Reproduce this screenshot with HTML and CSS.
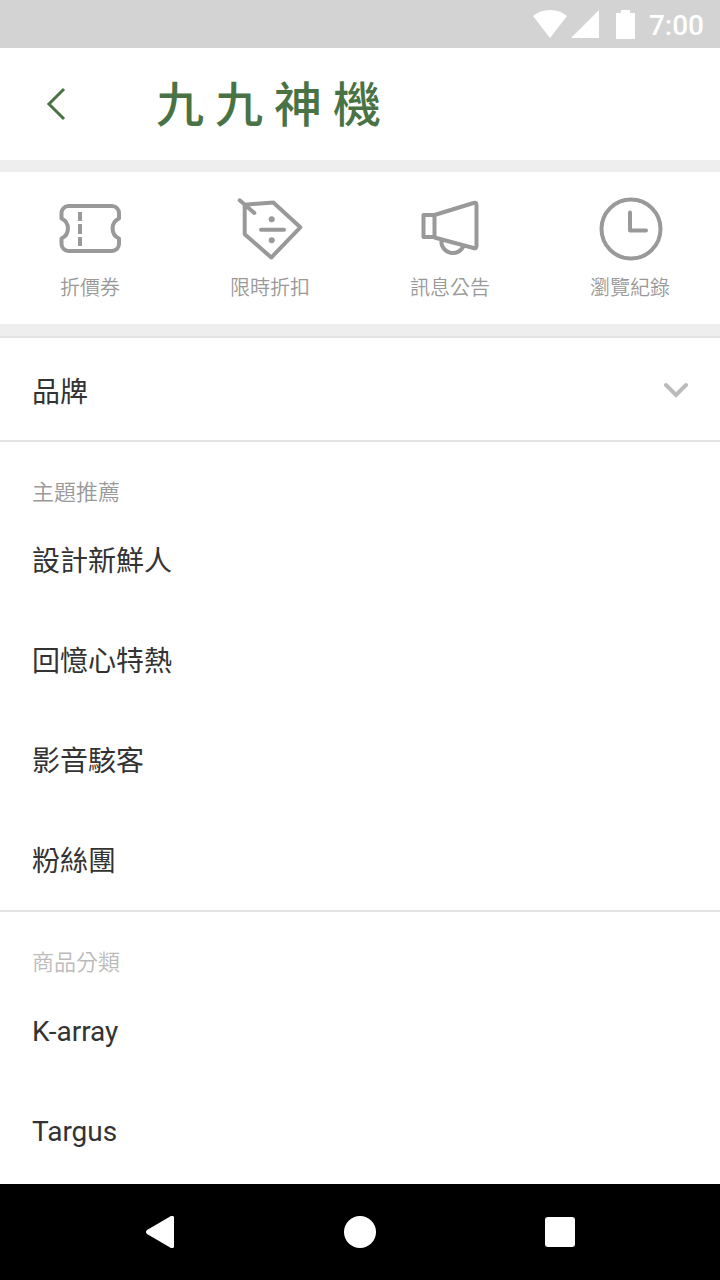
FILE: index.html
```html
<!DOCTYPE html>
<html lang="zh-Hant">
<head>
    <meta charset="UTF-8">
    <meta name="viewport" content="width=device-width, initial-scale=1.0">
    <title>九九神機</title>
    <link rel="stylesheet" href="styles.css">
</head>
<body>
    <div class="status-bar">
        <svg class="wifi" width="34" height="28" viewBox="0 0 34 28"><path d="M0 6Q7 0 17 0t17 6L17 28Z"/></svg>
        <svg class="signal" width="28" height="28" viewBox="0 0 28 28"><path d="M28 0v28H0Z"/></svg>
        <svg class="battery" width="19" height="29" viewBox="0 0 19 29"><path d="M5 0h9v3h5v26H0V3h5Z"/></svg>
        <span class="time">7:00</span>
    </div>

    <header class="header">
        <button type="button" class="back-btn" aria-label="返回">
            <svg width="20" height="36" viewBox="0 0 20 36"><path d="M18 3 3 18l15 15"/></svg>
        </button>
        <h1 class="logo"><span>九</span><span>九</span><span>神</span><span>機</span></h1>
    </header>

    <!-- Shortcuts -->
    <nav class="shortcuts">
        <a href="#coupon" class="shortcut">
            <svg width="72" height="72" viewBox="0 0 72 72">
                <path class="cut" d="M7.500 26.500V21a7 7 0 0 1 7-7H58a7 7 0 0 1 7 7v5.500a11 11 0 0 0 0 20V52a7 7 0 0 1-7 7H14.500a7 7 0 0 1-7-7v-5.500a11 11 0 0 0 0-20Z"/>
                <path class="cut" d="M26 20v9m0 3v10m0 3v9"/>
            </svg>
            <span>折價券</span>
        </a>
        <a href="#sale" class="shortcut">
            <svg width="72" height="72" viewBox="0 0 72 72">
                <path d="m10.700 12.700 28.600-2.200 27 24.800-29 30.200-26.600-23.200ZM5.700 8.300 20.300 21M27 37.700h23"/>
                <circle class="dot" cx="37.700" cy="27.300" r="3"/>
                <circle class="dot" cx="37.700" cy="48.300" r="3"/>
            </svg>
            <span>限時折扣</span>
        </a>
        <a href="#news" class="shortcut">
            <svg width="72" height="72" viewBox="0 0 72 72">
                <path d="M9.500 23h11v22h-11ZM20.500 23l39-12q3-1 3 2v41q0 3-3 2l-39-10.500M27.500 48a11.500 11.500 0 0 0 22 6"/>
            </svg>
            <span>訊息公告</span>
        </a>
        <a href="#history" class="shortcut">
            <svg width="72" height="72" viewBox="0 0 72 72">
                <circle cx="37" cy="37" r="29.500"/>
                <path d="M36 20.500v18h16"/>
            </svg>
            <span>瀏覽紀錄</span>
        </a>
    </nav>

    <main class="menu">
        <button type="button" class="brand-row" aria-expanded="false">
            品牌
            <svg width="24" height="16" viewBox="0 0 24 16"><path d="m2 3 10 10L22 3"/></svg>
        </button>

        <section class="menu-section">
            <h2>主題推薦</h2>
            <ul>
                <li><a href="#designer">設計新鮮人</a></li>
                <li><a href="#memory">回憶心特熱</a></li>
                <li><a href="#av">影音駭客</a></li>
                <li><a href="#fans">粉絲團</a></li>
            </ul>
        </section>

        <section class="menu-section">
            <h2 class="light">商品分類</h2>
            <ul>
                <li><a href="#k-array">K-array</a></li>
                <li><a href="#targus">Targus</a></li>
            </ul>
        </section>
    </main>

    <!-- Android navigation -->
    <footer class="system-nav">
        <button type="button" aria-label="Back">
            <svg width="32" height="32" viewBox="0 0 32 32"><path d="M27 0q3-1 3 2v28q0 3-3 2L3 18q-2-2 0-4Z"/></svg>
        </button>
        <button type="button" aria-label="Home">
            <svg width="32" height="32" viewBox="0 0 32 32"><circle cx="16" cy="16" r="16"/></svg>
        </button>
        <button type="button" aria-label="Recent apps">
            <svg width="32" height="32" viewBox="0 0 32 32"><rect x="1" y="1" width="30" height="30" rx="3"/></svg>
        </button>
    </footer>
</body>
</html>
```
FILE: styles.css
```css
* {
    margin: 0;
    padding: 0;
    box-sizing: border-box;
}

:root {
    --brand-color: #4a7345;
    --text-color: #333;
    --muted-color: #999;
    --line-color: #e3e3e3;
    --band-color: #eee;
}

body {
    min-height: 100vh;
    display: flex;
    flex-direction: column;
    background: #fff;
    color: var(--text-color);
    font-family: Roboto, "Noto Sans CJK TC", sans-serif;
    font-size: 28px;
}

button {
    border: none;
    background: none;
    font: inherit;
    color: inherit;
    cursor: pointer;
}

a {
    color: inherit;
    text-decoration: none;
}

ul {
    list-style: none;
}

svg {
    display: block;
}

.status-bar {
    display: flex;
    align-items: center;
    justify-content: flex-end;
    height: 48px;
    padding-right: 16px;
    background: #d3d3d3;
    color: #fff;
    fill: #fff;
}

.signal {
    margin-left: 4px;
}

.battery {
    margin: 0 14px 0 17px;
}

.time {
    padding-top: 4px;
    font-weight: 500;
    line-height: 44px;
}

.header {
    display: flex;
    align-items: center;
    height: 112px;
    color: var(--brand-color);
}

.back-btn {
    width: 112px;
    height: 112px;
    display: flex;
    align-items: center;
    justify-content: center;
}

.back-btn svg {
    fill: none;
    stroke: currentColor;
    stroke-width: 3;
}

.logo {
    display: flex;
    gap: 11px;
    margin-left: 44px;
    padding-top: 4px;
    font-size: 48px;
    font-weight: 500;
    line-height: 64px;
}

.shortcuts {
    display: grid;
    grid-template-columns: repeat(4, 1fr);
    padding: 20px 0;
    border-top: 12px solid var(--band-color);
    border-bottom: 12px solid var(--band-color);
}

.shortcut {
    display: flex;
    flex-direction: column;
    align-items: center;
    gap: 8px;
    color: var(--muted-color);
    font-size: 20px;
    font-weight: 350;
    line-height: 32px;
}

.shortcut svg {
    fill: none;
    stroke: currentColor;
    stroke-width: 4;
    stroke-linecap: round;
    stroke-linejoin: round;
}

.shortcut .cut {
    stroke-linecap: butt;
}

.shortcut .dot {
    fill: currentColor;
    stroke: none;
}

.menu {
    flex: 1;
}

.brand-row {
    display: flex;
    align-items: center;
    justify-content: space-between;
    width: 100%;
    height: 104px;
    padding: 2px 32px 0;
    border-top: 2px solid var(--line-color);
}

.brand-row svg {
    fill: none;
    stroke: #bbb;
    stroke-width: 4;
    stroke-linecap: round;
}

.menu-section {
    border-top: 2px solid var(--line-color);
}

.menu-section h2 {
    padding: 35px 32px 1px;
    color: var(--muted-color);
    font-size: 22px;
    font-weight: 350;
    line-height: 32px;
}

.menu-section h2.light {
    color: #bbb;
}

.menu-section a {
    display: block;
    padding: 4px 32px 0;
    line-height: 96px;
}

.system-nav {
    position: sticky;
    bottom: 0;
    display: grid;
    grid-template-columns: repeat(3, 1fr);
    height: 96px;
    padding: 0 60px;
    background: #000;
    fill: #fff;
}

.system-nav button {
    display: flex;
    align-items: center;
    justify-content: center;
}
```
